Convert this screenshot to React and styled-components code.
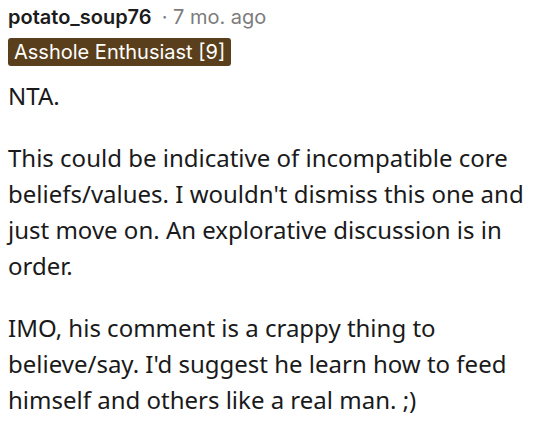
import React from "react";
import styled, { createGlobalStyle } from "styled-components";

const Global = createGlobalStyle`
  html, body { margin: 0; padding: 0; background: #ffffff; }
  body { font-family: "Noto Sans", "Open Sans", sans-serif; }
`;

const Comment = styled.article`
  padding: 0 8px;
  color: #1a1a1b;
`;

const Header = styled.div`
  display: flex;
  align-items: baseline;
  gap: 10px;
  font-family: Inter, "Noto Sans", sans-serif;
  font-size: 20px;
  line-height: 26px;
  padding-top: 4px;
`;

const Author = styled.span`
  font-weight: 600;
  color: #1c1c1c;
`;

const Meta = styled.span`
  color: #7c7c7c;
`;

const Flair = styled.span`
  display: inline-block;
  margin-top: 8px;
  background: #5a3f1c;
  color: #ffffff;
  font-family: Inter, "Noto Sans", sans-serif;
  font-size: 20px;
  line-height: 28px;
  padding: 0 6px;
  border-radius: 3px;
`;

const Body = styled.div`
  margin-top: 12px;
  font-size: 24px;
  line-height: 36px;
`;

const P = styled.p`
  margin: 0 0 26px;
`;

export default function App() {
  return (
    <>
      <Global />
      <Comment>
        <Header>
          <Author>potato_soup76</Author>
          <Meta>· 7 mo. ago</Meta>
        </Header>
        <Flair>Asshole Enthusiast [9]</Flair>
        <Body>
          <P>NTA.</P>
          <P>
            This could be indicative of incompatible core beliefs/values. I
            wouldn't dismiss this one and just move on. An explorative
            discussion is in order.
          </P>
          <P>
            IMO, his comment is a crappy thing to believe/say. I'd suggest he
            learn how to feed himself and others like a real man. ;)
          </P>
        </Body>
      </Comment>
    </>
  );
}
